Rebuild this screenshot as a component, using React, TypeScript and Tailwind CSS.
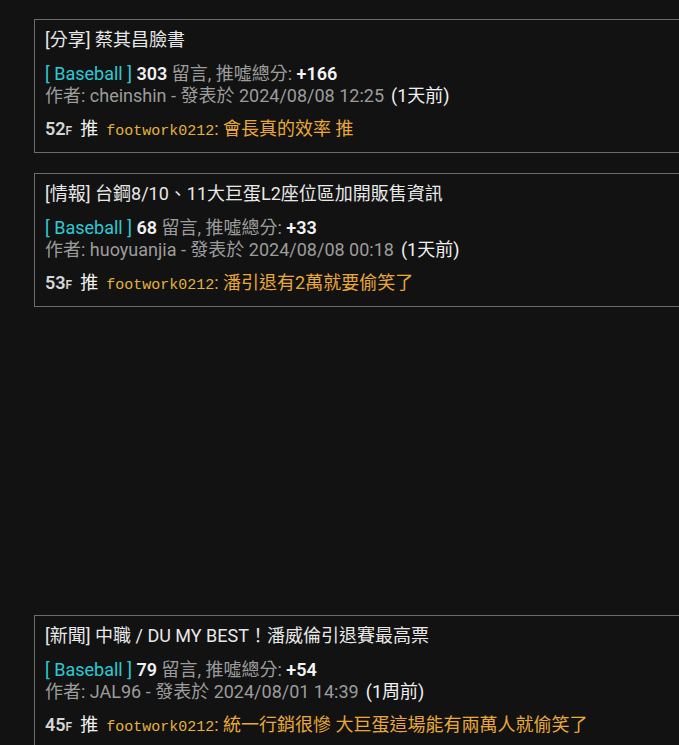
import React from 'react';

interface Post {
  tag: string;
  title: string;
  comments: number;
  score: string;
  author: string;
  date: string;
  ago: string;
  floor: number;
  push: string;
  user: string;
  text: string;
}

const posts: Post[] = [
  {
    tag: '分享',
    title: '蔡其昌臉書',
    comments: 303,
    score: '+166',
    author: 'cheinshin',
    date: '2024/08/08 12:25',
    ago: '1天前',
    floor: 52,
    push: '推',
    user: 'footwork0212',
    text: '會長真的效率 推',
  },
  {
    tag: '情報',
    title: '台鋼8/10、11大巨蛋L2座位區加開販售資訊',
    comments: 68,
    score: '+33',
    author: 'huoyuanjia',
    date: '2024/08/08 00:18',
    ago: '1天前',
    floor: 53,
    push: '推',
    user: 'footwork0212',
    text: '潘引退有2萬就要偷笑了',
  },
];

const last: Post = {
  tag: '新聞',
  title: '中職 / DU MY BEST！潘威倫引退賽最高票',
  comments: 79,
  score: '+54',
  author: 'JAL96',
  date: '2024/08/01 14:39',
  ago: '1周前',
  floor: 45,
  push: '推',
  user: 'footwork0212',
  text: '統一行銷很慘 大巨蛋這場能有兩萬人就偷笑了',
};

function PostCard({ post }: { post: Post }) {
  return (
    <div className="w-[700px] shrink-0 border border-[#6b6b6b] bg-[#121212] px-[10px] pt-[10px] pb-[12px]">
      <div className="h-5 text-[18px] leading-5 text-[#e8e8e8] whitespace-nowrap">
        [{post.tag}] {post.title}
      </div>
      <div className="mt-[13px] h-[22px] text-[18px] leading-[22px] whitespace-nowrap">
        <span className="text-[#2ec9d2]">[ Baseball ]</span>{' '}
        <span className="font-semibold text-[#f0f0f0]">{post.comments}</span>{' '}
        <span className="text-[#9c9c9c]">留言, 推噓總分:</span>{' '}
        <span className="font-semibold text-[#f4f4f4]">{post.score}</span>
      </div>
      <div className="h-[22px] text-[18px] leading-[22px] whitespace-nowrap">
        <span className="text-[#9c9c9c]">
          作者: {post.author} - 發表於 {post.date}
        </span>
        <span className="ml-[7px] text-[#f0f0f0]">({post.ago})</span>
      </div>
      <div className="mt-[11px] flex h-[22px] items-baseline leading-[22px] whitespace-nowrap">
        <span className="text-[18px] font-semibold text-[#d6d6d6]">{post.floor}</span>
        <span className="text-[12px] font-semibold text-[#d6d6d6]">F</span>
        <span className="ml-[8px] mr-[8px] text-[18px] text-[#f4f4f4]">{post.push}</span>
        <span className="font-['Liberation_Mono',monospace] text-[15px] text-[#e3b23c]">{post.user}</span>
        <span className="text-[18px] text-[#e8a93a]">: {post.text}</span>
      </div>
    </div>
  );
}

export default function App() {
  return (
    <div
      className="h-[745px] w-[679px] overflow-hidden bg-[#121212] pl-[34px] pt-[19px] flex flex-col gap-5"
      style={{ fontFamily: "Roboto, 'Noto Sans CJK TC', sans-serif" }}
    >
      {posts.map(p => (
        <PostCard key={p.floor} post={p} />
      ))}
      <div className="h-[268px] shrink-0" />
      <PostCard post={last} />
    </div>
  );
}
